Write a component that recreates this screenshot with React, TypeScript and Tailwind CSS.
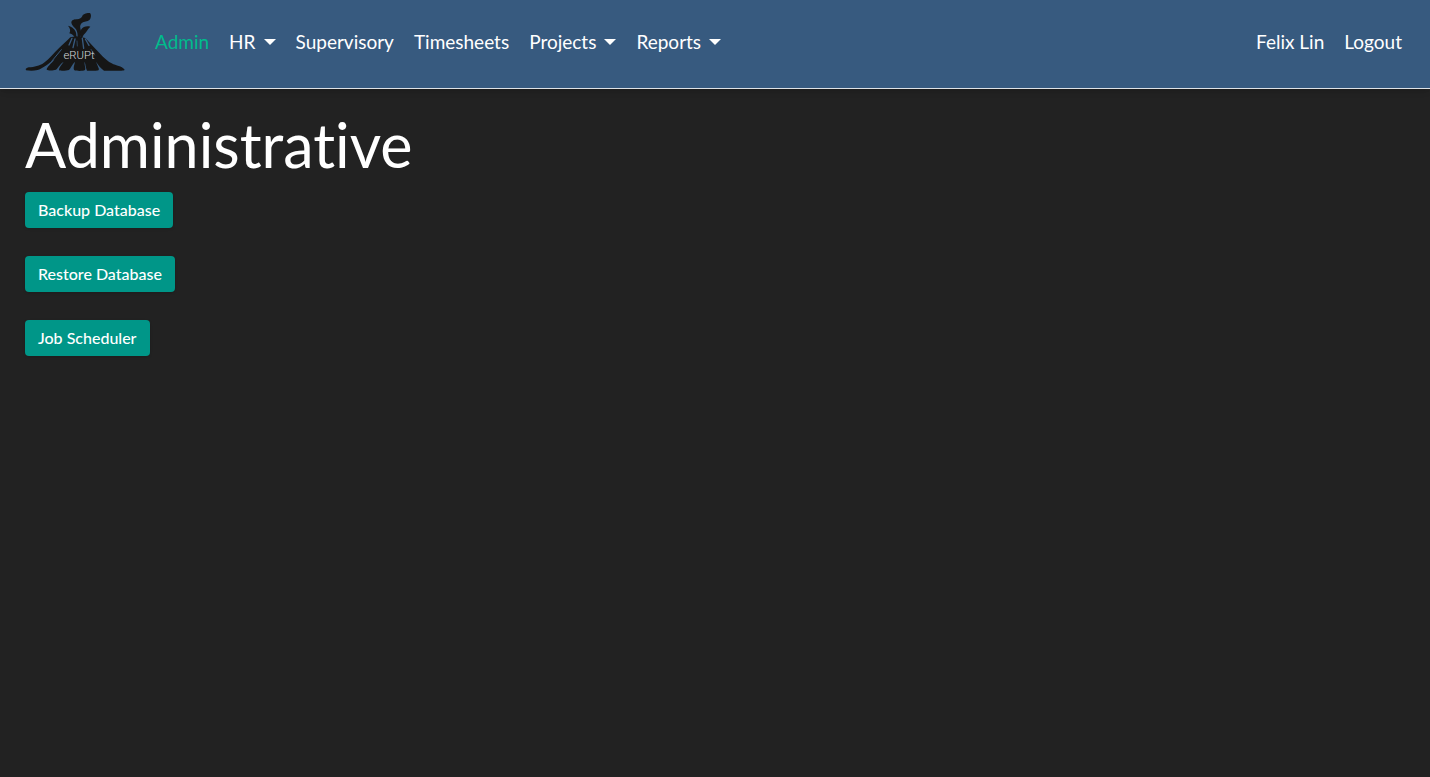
const navItems = [
  { label: "Admin", active: true },
  { label: "HR", menu: true },
  { label: "Supervisory" },
  { label: "Timesheets" },
  { label: "Projects", menu: true },
  { label: "Reports", menu: true },
];

const actions = ["Backup Database", "Restore Database", "Job Scheduler"];

function Logo() {
  return (
    <svg viewBox="30 21 300 180" className="h-[60px] w-[100px]" role="img" aria-label="eRUPt">
      <g fill="#161616">
        <path d="M224 24C229 26 229 36 225 43C221 50 210 49 204 52C197 56 194 62 196 70C199 80 199 90 196 98L187 104C189 92 188 81 183 73C178 66 170 61 169 53C169 45 178 43 186 43C194 42 200 39 202 33C205 25 218 24 224 24Z" />
        <path d="M226 65C214 62 204 66 199 73C194 81 197 90 196 102L203 96C204 91 209 87 213 82C218 75 220 70 226 65Z" />
        <path d="M159 62C168 64 178 70 182 80C185 87 183 95 186 104L180 98C176 93 173 87 163 85C168 77 165 69 159 62Z" />
        <path d="M166 97L184 94L211 99L241 131C257 147 270 164 290 175C304 183 320 183 328 193C331 198 320 197 313 197L267 197C257 190 250 180 243 170L251 190C254 198 246 197 238 197L216 197C212 188 212 179 209 170C207 179 213 189 210 195C203 199 185 198 178 196C173 188 179 179 180 170C172 178 168 188 162 195C153 198 138 198 132 196C131 188 140 180 146 170C134 178 130 188 123 194C114 197 99 197 95 194C96 186 108 177 119 163C101 175 86 190 68 195C55 198 42 197 33 196C31 193 33 189 41 187C59 185 73 183 87 173C104 161 116 144 133 128C145 117 155 108 166 97Z" />
      </g>
      <g fill="none" stroke="#375a7f" strokeLinecap="round">
        <path d="M171 100L162 120" strokeWidth="4" />
        <path d="M180 102L174 128" strokeWidth="4" />
        <path d="M186 108L187 123" strokeWidth="2" />
        <path d="M202 100L206 130" strokeWidth="4" />
        <path d="M211 102L222 121" strokeWidth="4" />
        <path d="M139 134L110 169" strokeWidth="3" />
        <path d="M228 133L239 150" strokeWidth="2" />
      </g>
      <text x="192" y="163" textAnchor="middle" fontSize="34" fill="#d5d9dc" className="font-['Roboto',sans-serif] font-light">
        eRUPt
      </text>
    </svg>
  );
}

export default function App() {
  return (
    <div className="min-h-screen bg-[#222222] font-['Lato',sans-serif] text-white [font-variant-ligatures:none]">
      <header className="border-b border-[#dee2e6] bg-[#375a7f] shadow-md">
        <nav aria-label="Main" className="flex items-center px-6 pt-3 pb-4 text-[19px] leading-7">
          <a href="#home" className="mr-5 ml-px">
            <Logo />
          </a>
          <ul className="flex flex-1">
            {navItems.map(({ label, active, menu }) => (
              <li key={label}>
                {menu ? (
                  <button type="button" aria-haspopup="menu" className="flex items-center px-2.5">
                    {label}
                    <svg viewBox="0 0 12 6" className="ml-2 h-[6px] w-[12px]" fill="currentColor" aria-hidden="true">
                      <path d="M0 0H12L6 6Z" />
                    </svg>
                  </button>
                ) : (
                  <a href={`#${label.toLowerCase()}`} className={active ? "block px-2.5 text-[#00bc8c]" : "block px-2.5"}>
                    {label}
                  </a>
                )}
              </li>
            ))}
          </ul>
          <div className="flex gap-5 pr-1">
            <a href="#profile">Felix Lin</a>
            <a href="#logout">Logout</a>
          </div>
        </nav>
      </header>
      <main className="px-[25px] pt-5">
        <h1 className="mb-[11px] text-[61px] leading-[72px]">Administrative</h1>
        <div className="flex flex-col items-start gap-7">
          {actions.map((action) => (
            <button key={action} type="button" className="rounded-[4px] bg-[#009688] px-[13px] py-1.5 text-[16px] leading-6 font-medium shadow-sm">
              {action}
            </button>
          ))}
        </div>
      </main>
    </div>
  );
}
